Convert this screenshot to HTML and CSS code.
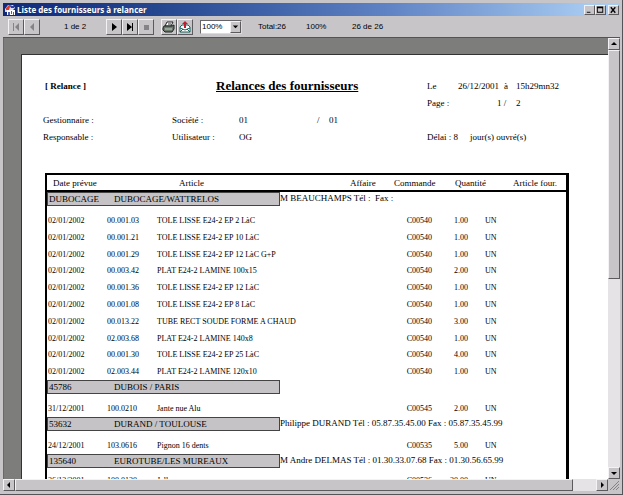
FILE: index.html
```html
<!DOCTYPE html>
<html lang="fr">
<head>
<meta charset="utf-8">
<title>Liste des fournisseurs à relancer</title>
<link rel="stylesheet" href="styles.css">
</head>
<body>
<div class="window">
  <header class="titlebar">
    <svg class="app-icon" viewBox="0 0 12 12" aria-hidden="true">
      <path d="M1 5 4 1h5l2 3-2 2H5L3 8H1z" fill="#d9dcf0"/>
      <path d="M2 4 5 1h3L6 3 5 6H2z" fill="#e03a2c"/>
      <path d="M6 2h4v2H7z" fill="#2b3fa8"/>
      <path d="M3 6h8v5H3z" fill="#fff"/>
      <path d="M4 8h2v3H4zM7 7h1v3H7zM9 8h1v3H9z" fill="#4a5fae"/>
    </svg>
    <h1 class="caption">Liste des fournisseurs à relancer</h1>
    <div class="caption-buttons">
      <button class="cap" aria-label="Réduire"><svg viewBox="0 0 10 8"><path d="M2 6h4v1H2z"/></svg></button>
      <button class="cap" aria-label="Agrandir"><svg viewBox="0 0 10 8"><path d="M1 0h7v7H1zM2 2v4h5V2z" fill-rule="evenodd"/></svg></button>
      <button class="cap close" aria-label="Fermer"><svg viewBox="0 0 10 8"><path d="m2 1 5 6M7 1 2 7" stroke="#000" stroke-width="1.5"/></svg></button>
    </div>
  </header>

  <div class="toolbar">
    <div class="group">
      <button class="tool" aria-label="Première page" disabled><svg viewBox="0 0 14 14"><path class="off" d="M4 3h1v8H4zM10 3v8L6 7z"/></svg></button>
      <button class="tool" aria-label="Page précédente" disabled><svg viewBox="0 0 14 14"><path class="off" d="M9 3v8L5 7z"/></svg></button>
    </div>
    <span class="page-no">1 de 2</span>
    <div class="group">
      <button class="tool" aria-label="Page suivante"><svg viewBox="0 0 14 14"><path d="M5 3v8l5-4z"/></svg></button>
      <button class="tool" aria-label="Dernière page"><svg viewBox="0 0 14 14"><path d="M4 3v8l5-4zM9 3h1v8H9z"/></svg></button>
      <button class="tool" aria-label="Arrêter" disabled><svg viewBox="0 0 14 14"><path class="off" d="M5 5h5v5H5z"/></svg></button>
    </div>
    <div class="group print">
      <button class="tool" aria-label="Imprimer"><svg viewBox="0 0 14 14"><path d="M5 2h6l-2 4H3z" fill="#fff" stroke="#222"/><path d="M2 6h8l2-1v4l-2 3H3L1 10V8z" fill="#6d786f" stroke="#1c221e"/><path d="M3 9h7" stroke="#c4d2c4"/><path d="M6 4h3" stroke="#333"/></svg></button>
      <button class="tool" aria-label="Exporter"><svg viewBox="0 0 14 14"><path d="M2 7 4 5h6l2 2v5H2z" fill="#fff" stroke="#17635c"/><path d="m2 8 5 2 5-2M2 12l3-3M12 12 9 9" fill="none" stroke="#17635c"/><path d="M7 1l3 3H8v4H6V4H4z" fill="#c41c30"/></svg></button>
    </div>
    <label class="zoom">
      <select aria-label="Zoom"><option>100%</option></select>
      <span class="drop"><svg viewBox="0 0 10 10"><path d="M2 4h6L5 7z"/></svg></span>
    </label>
    <span class="total">Total:26</span>
    <span class="percent">100%</span>
    <span>26 de 26</span>
  </div>

  <main class="view">
    <div class="canvas">
      <article class="paper">
        <section class="heading">
          <b class="tag">[ Relance ]</b>
          <h2>Relances des fournisseurs</h2>
          <span class="c1 r3">Gestionnaire :</span>
          <span class="c2 r3">Société :</span>
          <span class="c3 r3">01</span>
          <span class="c4 r3">/</span>
          <span class="c5 r3">01</span>
          <span class="c1 r4">Responsable :</span>
          <span class="c2 r4">Utilisateur :</span>
          <span class="c3 r4">OG</span>
          <div class="stamp">
            <span class="s1 r1">Le</span><span class="s2 r1">26/12/2001</span><span class="s5 r1">à</span><span class="s6 r1">15h29mn32</span>
            <span class="s1 r2">Page :</span><span class="s4 r2">1 /</span><span class="s6 r2">2</span>
            <span class="s1 r4">Délai : 8</span><span class="s3 r4">jour(s) ouvré(s)</span>
          </div>
        </section>

        <table class="report">
          <colgroup><col class="w-date"><col class="w-code"><col><col class="w-case"><col class="w-order"><col class="w-qty"><col class="w-unit"><col class="w-ref"></colgroup>
          <thead>
            <tr><th class="h-date">Date prévue</th><th colspan="2" class="h-item">Article</th><th>Affaire</th><th>Commande</th><th colspan="2" class="h-qty">Quantité</th><th>Article four.</th></tr>
          </thead>
          <tbody>
            <tr class="supplier"><td colspan="8"><div class="line"><div class="name"><span>DUBOCAGE</span><span>DUBOCAGE/WATTRELOS</span></div><span>M BEAUCHAMPS Tél :&nbsp; Fax :</span></div></td></tr>
            <tr><td>02/01/2002</td><td>00.001.03</td><td>TOLE LISSE E24-2 EP 2 LàC</td><td></td><td>C00540</td><td>1.00</td><td>UN</td><td></td></tr>
            <tr><td>02/01/2002</td><td>00.001.21</td><td>TOLE LISSE E24-2 EP 10 LàC</td><td></td><td>C00540</td><td>1.00</td><td>UN</td><td></td></tr>
            <tr><td>02/01/2002</td><td>00.001.29</td><td>TOLE LISSE E24-2 EP 12 LàC G+P</td><td></td><td>C00540</td><td>1.00</td><td>UN</td><td></td></tr>
            <tr><td>02/01/2002</td><td>00.003.42</td><td>PLAT E24-2 LAMINE 100x15</td><td></td><td>C00540</td><td>2.00</td><td>UN</td><td></td></tr>
            <tr><td>02/01/2002</td><td>00.001.36</td><td>TOLE LISSE E24-2 EP 12 LàC</td><td></td><td>C00540</td><td>1.00</td><td>UN</td><td></td></tr>
            <tr><td>02/01/2002</td><td>00.001.08</td><td>TOLE LISSE E24-2 EP 8 LàC</td><td></td><td>C00540</td><td>1.00</td><td>UN</td><td></td></tr>
            <tr><td>02/01/2002</td><td>00.013.22</td><td>TUBE RECT SOUDE FORME A CHAUD</td><td></td><td>C00540</td><td>3.00</td><td>UN</td><td></td></tr>
            <tr><td>02/01/2002</td><td>02.003.68</td><td>PLAT E24-2 LAMINE 140x8</td><td></td><td>C00540</td><td>1.00</td><td>UN</td><td></td></tr>
            <tr><td>02/01/2002</td><td>00.001.30</td><td>TOLE LISSE E24-2 EP 25 LàC</td><td></td><td>C00540</td><td>4.00</td><td>UN</td><td></td></tr>
            <tr><td>02/01/2002</td><td>02.003.44</td><td>PLAT E24-2 LAMINE 120x10</td><td></td><td>C00540</td><td>1.00</td><td>UN</td><td></td></tr>
          </tbody>
          <tbody>
            <tr class="supplier"><td colspan="8"><div class="line"><div class="name"><span>45786</span><span>DUBOIS / PARIS</span></div></div></td></tr>
            <tr><td>31/12/2001</td><td>100.0210</td><td>Jante nue Alu</td><td></td><td>C00545</td><td>2.00</td><td>UN</td><td></td></tr>
          </tbody>
          <tbody>
            <tr class="supplier"><td colspan="8"><div class="line"><div class="name"><span>53632</span><span>DURAND / TOULOUSE</span></div><span>Philippe DURAND Tél : 05.87.35.45.00 Fax : 05.87.35.45.99</span></div></td></tr>
            <tr><td>24/12/2001</td><td>103.0616</td><td>Pignon 16 dents</td><td></td><td>C00535</td><td>5.00</td><td>UN</td><td></td></tr>
          </tbody>
          <tbody class="last">
            <tr class="supplier"><td colspan="8"><div class="line"><div class="name"><span>135640</span><span>EUROTUBE/LES MUREAUX</span></div><span>M Andre DELMAS Tél : 01.30.33.07.68 Fax : 01.30.56.65.99</span></div></td></tr>
            <tr><td>26/12/2001</td><td>100.0120</td><td>Jalla</td><td></td><td>C00536</td><td>20.00</td><td>UN</td><td></td></tr>
          </tbody>
        </table>
      </article>
    </div>
    <div class="scroll vertical">
      <button aria-label="Défiler vers le haut"><svg viewBox="0 0 10 10"><path d="M2 6h6L5 3z"/></svg></button>
      <div class="track"><div class="thumb"></div></div>
      <button aria-label="Défiler vers le bas"><svg viewBox="0 0 10 10"><path d="M2 4h6L5 7z"/></svg></button>
    </div>
    <div class="scroll horizontal">
      <button aria-label="Défiler à gauche"><svg viewBox="0 0 10 10"><path d="M6 2v6L3 5z"/></svg></button>
      <div class="track"><div class="thumb"></div></div>
      <button aria-label="Défiler à droite"><svg viewBox="0 0 10 10"><path d="M4 2v6l3-3z"/></svg></button>
    </div>
    <svg class="grip" viewBox="0 0 12 12" aria-hidden="true"><path d="M2 11l9-9M5 11l6-6M8 11l3-3" stroke="#858387"/></svg>
  </main>
</div>
</body>
</html>
```
FILE: styles.css
```css
* { box-sizing: border-box; }

body {
  margin: 0;
  color: #000;
  background: #c8c5c8;
  font-family: "Liberation Sans", sans-serif;
  font-size: 8px;
}

button {
  padding: 0;
  border: 1px solid;
  border-color: #f4f2f4 #5c5a5c #5c5a5c #f4f2f4;
  background: #c8c5c8;
}

svg { display: block; }

.window {
  display: flex;
  flex-direction: column;
  height: 100vh;
  padding: 3px 2px 3px 3px;
  border-right: 1px solid #555358;
  border-bottom: 1px solid #555358;
  overflow: hidden;
}

/* Title bar */
.titlebar {
  display: flex;
  align-items: center;
  flex: none;
  height: 13px;
  padding: 0 1px;
  color: #fff;
  background: linear-gradient(90deg, #12297a, #24468f 25%, #5f82c4 62%, #a6caf0 95%);
}
.app-icon { width: 12px; height: 12px; }
.caption {
  flex: 1;
  margin: 0 0 0 1px;
  font: bold 8px/12px "Open Sans", sans-serif;
  white-space: nowrap;
}
.caption-buttons { display: flex; }
.cap { width: 11px; height: 10px; }
.cap svg { width: 9px; height: 8px; }
.close { margin-left: 2px; }

/* Toolbar */
.toolbar {
  display: flex;
  align-items: center;
  flex: none;
  height: 21px;
  padding-left: 5px;
  white-space: nowrap;
}
.group { display: flex; }
.tool { width: 16px; height: 16px; }
.tool svg { width: 14px; height: 14px; }
.off { fill: #858387; }
.page-no { width: 66px; padding-left: 24px; }
.print { margin: 0 7px; }
.zoom {
  display: flex;
  align-items: center;
  width: 42px;
  height: 14px;
  border: 1px solid;
  border-color: #666468 #dddbdd #dddbdd #666468;
  background: #fff;
}
.zoom select {
  flex: 1;
  min-width: 0;
  height: 12px;
  padding: 0 0 0 1px;
  border: 0;
  appearance: none;
  background: #fff;
  color: #000;
  font: 8px/12px "Liberation Sans", sans-serif;
}
.drop {
  width: 11px;
  height: 12px;
  border: 1px solid;
  border-color: #f4f2f4 #5c5a5c #5c5a5c #f4f2f4;
  background: #c8c5c8;
}
.total { width: 48px; margin-left: 16px; }
.percent { width: 46px; }

/* Preview area */
.view {
  display: grid;
  grid-template: minmax(0, 1fr) 12px / minmax(0, 1fr) 12px;
  flex: 1;
  min-height: 0;
  border-top: 1px solid #555358;
}
.canvas {
  padding: 16px 0 0 17px;
  overflow: hidden;
  border-left: 1px solid #6a696a;
  background: #7d7e7c;
}
.paper {
  min-height: 100%;
  padding: 22px 39px 0 23px;
  border-top: 1px solid #333;
  border-left: 1px solid #333;
  background: #fff;
  font-family: "Liberation Serif", serif;
}
.heading {
  display: grid;
  grid-template-columns: 129px 67px 78px 12px 98px minmax(0, 1fr);
  grid-template-rows: repeat(4, 17px);
  align-items: center;
  margin-left: -2px;
  font-size: 9px;
  white-space: nowrap;
}
.tag { grid-area: 1 / 1; padding-left: 2px; }
.heading h2 {
  grid-area: 1 / 2 / 2 / 6;
  margin: 0 0 0 44px;
  font-size: 13px;
  line-height: 16px;
  text-decoration: underline;
}
.c1 { grid-column: 1; }
.c2 { grid-column: 2; }
.c3 { grid-column: 3; }
.c4 { grid-column: 4; }
.c5 { grid-column: 5; }
.r1 { grid-row: 1; }
.r2 { grid-row: 2; }
.r3 { grid-row: 3; }
.r4 { grid-row: 4; }
.stamp {
  grid-area: 1 / 6 / 5 / 7;
  display: grid;
  grid-template-columns: 31px 12px 27px 7px 12px minmax(0, 1fr);
  grid-template-rows: repeat(4, 17px);
  align-items: center;
}
.s1 { grid-column: 1 / 3; }
.s2 { grid-column: 2 / 5; }
.s3 { grid-column: 3 / 7; }
.s4 { grid-column: 4 / 6; }
.s5 { grid-column: 5; }
.s6 { grid-column: 6; }

/* Report table */
.report {
  width: 100%;
  margin-top: 28px;
  table-layout: fixed;
  border: 2px solid #000;
  border-right-width: 3px;
  border-spacing: 0;
  white-space: nowrap;
}
.w-date { width: 60px; }
.w-code { width: 50px; }
.w-case { width: 44px; }
.w-order { width: 41px; }
.w-qty { width: 36px; }
.w-unit { width: 42px; }
.w-ref { width: 53px; }
th {
  height: 17px;
  padding: 0;
  border-bottom: 2px solid #000;
  font-size: 9px;
  font-weight: normal;
  line-height: 12px;
  text-align: left;
}
.h-date { padding-left: 6px; }
.h-item { padding-left: 72px; }
.h-qty { padding-left: 20px; }
td {
  height: 17px;
  padding: 0;
  line-height: 12px;
}
tr:nth-child(5n) td { height: 16px; }
td:first-child { padding-left: 1px; }
td:nth-child(5), td:nth-child(6) { text-align: right; }
td:nth-child(5), td:nth-child(6) { padding-right: 3px; }
td:nth-child(7) { padding-left: 14px; }
.last td { height: 14px; }
.report .supplier td {
  height: 20px;
  padding: 0;
  font-size: 9px;
  vertical-align: top;
}
.line { display: flex; }
.name {
  display: grid;
  grid-template-columns: 65px 1fr;
  width: 233px;
  height: 14px;
  padding-left: 1px;
  border: 1px solid #444;
  background: #c5c3c5;
}

/* Scroll bars */
.scroll { display: flex; background: #e6e3e6; }
.scroll button { flex: none; width: 12px; height: 12px; }
.vertical { flex-direction: column; }
.track { flex: 1; }
.thumb {
  border: 1px solid;
  border-color: #f4f2f4 #5c5a5c #5c5a5c #f4f2f4;
  background: #c8c5c8;
}
.vertical .thumb { height: 55%; }
.horizontal .thumb { width: 96%; height: 12px; }
.grip { width: 12px; height: 12px; }
```
